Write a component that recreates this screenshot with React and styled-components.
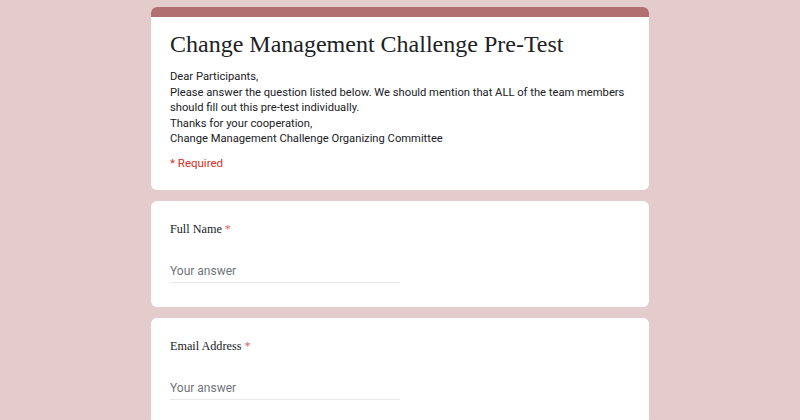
import React from "react";
import styled, { createGlobalStyle } from "styled-components";

const Global = createGlobalStyle`
  html, body { margin: 0; padding: 0; background: #e4cccd; }
  body { font-family: Roboto, "Liberation Sans", Arial, sans-serif; }
`;

const Page = styled.div`
  display: flex;
  flex-direction: column;
  align-items: center;
  gap: 11px;
  padding-top: 7px;
  min-height: 420px;
  box-sizing: border-box;
`;

const Card = styled.div`
  width: 498px;
  background: #fff;
  border-radius: 6px;
  overflow: hidden;
  box-sizing: border-box;
  display: flex;
  flex-direction: column;
`;

const TopBar = styled.div`
  height: 10px;
  background: #b0706f;
`;

const HeaderBody = styled.div`
  padding: 9px 19px 19px;
  display: flex;
  flex-direction: column;
`;

const Title = styled.h1`
  margin: 0;
  font-family: "Liberation Serif", "DejaVu Serif", serif;
  font-weight: 400;
  font-size: 24px;
  line-height: 36px;
  color: #202124;
`;

const Description = styled.div`
  margin-top: 7px;
  font-size: 11.2px;
  line-height: 15.5px;
  color: #202124;
`;

const Required = styled.div`
  margin-top: 8px;
  font-size: 11.5px;
  line-height: 16px;
  color: #d93025;
`;

const QuestionBody = styled.div`
  padding: 18px 19px 24px;
  display: flex;
  flex-direction: column;
  gap: 24px;
`;

const Label = styled.div`
  font-family: "Liberation Serif", "DejaVu Serif", serif;
  font-size: 12.2px;
  line-height: 20px;
  color: #202124;
`;

const Star = styled.span`
  color: #d96a5f;
`;

const Answer = styled.div`
  width: 230px;
  padding-bottom: 3px;
  border-bottom: 1px solid #e8e8e8;
  font-size: 12px;
  line-height: 16px;
  color: #70757a;
`;

const Question = ({ label }) => (
  <Card>
    <QuestionBody>
      <Label>
        {label} <Star>*</Star>
      </Label>
      <Answer>Your answer</Answer>
    </QuestionBody>
  </Card>
);

export default function App() {
  return (
    <>
      <Global />
      <Page>
        <Card>
          <TopBar />
          <HeaderBody>
            <Title>Change Management Challenge Pre-Test</Title>
            <Description>
              Dear Participants,
              <br />
              Please answer the question listed below. We should mention that ALL of the team members should fill out this pre-test individually.
              <br />
              Thanks for your cooperation,
              <br />
              Change Management Challenge Organizing Committee
            </Description>
            <Required>* Required</Required>
          </HeaderBody>
        </Card>
        <Question label="Full Name" />
        <Question label="Email Address" />
      </Page>
    </>
  );
}
